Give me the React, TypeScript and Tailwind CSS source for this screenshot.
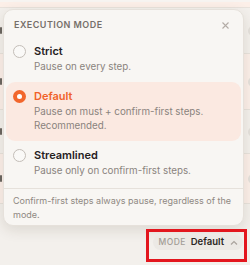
import React from "react";

const options = [
  { id: "strict", label: "Strict", desc: ["Pause on every step."] },
  { id: "default", label: "Default", desc: ["Pause on must + confirm-first steps.", "Recommended."] },
  { id: "streamlined", label: "Streamlined", desc: ["Pause only on confirm-first steps."] },
];

function BgRow({ h, tint }: { h: string; tint?: boolean }) {
  return (
    <div className={`${h} flex items-center justify-between border-b border-[#e7e2dc] ${tint ? "bg-[#fbefe9]" : ""}`}>
      <span className="ml-[12px] h-[7px] w-[2px] rounded-[1px] bg-[#6b6661]" />
      <span className="mr-[-2px] h-[10px] w-[10px] rounded-full bg-[#e4e0db]" />
    </div>
  );
}

export default function App() {
  return (
    <div className="relative h-[265px] w-[250px] overflow-hidden bg-[#f3f0ec]" style={{ fontFamily: "Inter, 'Noto Sans', sans-serif" }}>
      {/* background page */}
      <div className="flex flex-col">
        <div className="h-[2px] bg-[#f7f4f1]" />
        <div className="h-[6px] border-b border-[#e8e2dc] bg-[#fcefe8]" />
        <div className="ml-[-12px] mr-[-6px] flex flex-col">
          <BgRow h="h-[46px]" />
          <BgRow h="h-[56px]" tint />
          <BgRow h="h-[44px]" />
          <BgRow h="h-[50px]" tint />
        </div>
      </div>

      {/* popover */}
      <div className="absolute left-[3px] top-[9px] w-[241px] rounded-[10px] border border-[#e6e1db] bg-[#f8f6f3] shadow-[0_4px_14px_rgba(60,40,20,0.12)]">
        <div className="flex items-center justify-between pl-[10px] pr-[14px] pt-[8px]">
          <span className="text-[9px] font-semibold uppercase leading-[14px] tracking-[0.05em] text-[#766f69]">Execution mode</span>
          <svg width="7" height="7" viewBox="0 0 7 7" className="text-[#b3aca6]">
            <path d="M0.5 0.5 L6.5 6.5 M6.5 0.5 L0.5 6.5" stroke="currentColor" strokeWidth="1.1" />
          </svg>
        </div>
        <div className="mt-[5px] flex flex-col px-[2px]">
          {options.map((o) => {
            const active = o.id === "default";
            return (
              <div
                key={o.id}
                className={`flex gap-[8px] rounded-[9px] px-[7px] pb-[8px] pt-[7px] ${active ? "bg-[#fbe9e1]" : ""}`}
              >
                <div className="flex h-[15px] items-center">
                  {active ? (
                    <span className="flex h-[13px] w-[13px] items-center justify-center rounded-full bg-[#f2662c]">
                      <span className="h-[5px] w-[5px] rounded-full bg-white" />
                    </span>
                  ) : (
                    <span className="h-[13px] w-[13px] rounded-full border border-[#c4beb8] bg-[#faf9f7]" />
                  )}
                </div>
                <div className="flex flex-col">
                  <span className={`text-[11px] font-semibold leading-[15px] ${active ? "text-[#f0612a]" : "text-[#26211e]"}`}>{o.label}</span>
                  <div className="mt-[1px] flex flex-col">
                    {o.desc.map((d) => (
                      <span key={d} className="text-[9.8px] leading-[14px] text-[#8a837d]">{d}</span>
                    ))}
                  </div>
                </div>
              </div>
            );
          })}
        </div>
        <div className="mt-[2px] border-t border-[#e6e1db] pb-[3px] pl-[9px] pr-[2px] pt-[5px]">
          <p className="text-[9px] leading-[14px] text-[#8f8882]">
            Confirm-first steps always pause, regardless of the mode.
          </p>
        </div>
      </div>

      {/* mode trigger */}
      <div className="absolute left-[146px] top-[229px] flex h-[33px] w-[101px] items-start justify-end border-[3px] border-[#e3161e] pr-[1px] pt-[3px]">
        <div className="flex h-[15px] items-center rounded-full bg-[#ece9e5] pl-[6px] pr-[5px]">
          <span className="text-[8.5px] font-medium uppercase tracking-[0.05em] text-[#a29c96]">Mode</span>
          <span className="ml-[5px] text-[9.5px] font-semibold text-[#2b2623]">Default</span>
          <svg width="8" height="6" viewBox="0 0 8 6" className="ml-[6px] text-[#aaa39d]">
            <path d="M1 4.5 L4 1.5 L7 4.5" fill="none" stroke="currentColor" strokeWidth="1.2" />
          </svg>
        </div>
      </div>
    </div>
  );
}
